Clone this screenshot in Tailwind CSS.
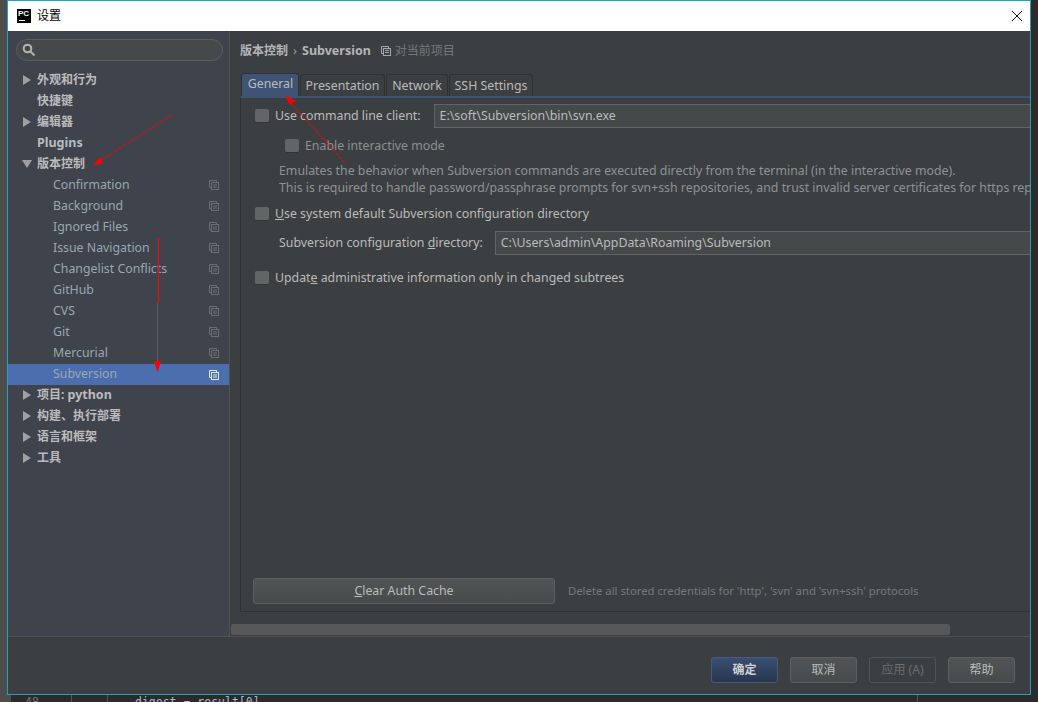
<!DOCTYPE html>
<html lang="zh-CN">
<head>
  <meta charset="UTF-8"/>
  <title>设置</title>
  <script src="https://cdn.jsdelivr.net/npm/@tailwindcss/browser@4"></script>
</head>
<body class="bg-[#2b2b2b] font-['Noto_Sans','Noto_Sans_CJK_SC',sans-serif] text-[12.33px] text-[#bbbbbb]">
<div class="relative w-[1038px] h-[702px] overflow-hidden flex">
  <!-- ide behind the dialog -->
  <div class="w-[7px] h-full bg-[#4d4d4d] shrink-0"></div>
  <div class="flex flex-col w-[1031px]">
    <!-- dialog -->
    <div class="w-[1024px] h-[695px] shrink-0 border border-[#1ba3c6] flex flex-col bg-[#3c3f41]">
      <div class="h-[30px] shrink-0 bg-white flex items-center text-black pl-[9px] pr-[7px]">
        <div class="w-[14px] h-[14px] bg-black relative shrink-0">
          <span class="absolute left-[1px] top-[0px] text-[8px] leading-[9px] font-bold text-white font-['Liberation_Sans']">PC</span>
          <span class="absolute left-[2px] bottom-[2px] w-[6px] h-px bg-white"></span>
        </div>
        <span class="ml-[6px] text-[12px]">设置</span>
        <svg class="ml-auto" width="12" height="12" viewBox="0 0 12 12"><path d="M1 1L11 11M11 1L1 11" stroke="#111" stroke-width="1" fill="none"/></svg>
      </div>

      <div class="flex-1 flex min-h-0">
        <!-- sidebar -->
        <div class="w-[221px] shrink-0 bg-[#3e434c] pt-[8px]">
          <div class="ml-[8px] mr-[6px] h-[22px] rounded-full border border-[#5a5d5f] bg-[#45494a] flex items-center pl-[5px]">
            <svg width="14" height="14" viewBox="0 0 14 14" fill="none" stroke="#b4b4b4" stroke-width="2"><circle cx="5.500" cy="5.500" r="3.800"/><path d="M8.500 8.500L12.500 12.500"/></svg>
          </div>
          <div class="mt-[8px] flex flex-col">
            <div class="h-[21px] flex items-center pl-[15px] font-bold text-[12px] gap-[6px]"><svg width="8" height="10" viewBox="0 0 8 10"><path d="M0 0L8 5L0 10Z" fill="#a0a0a0"/></svg><span>外观和行为</span></div>
            <div class="h-[21px] flex items-center pl-[29px] font-bold text-[12px]"><span>快捷键</span></div>
            <div class="h-[21px] flex items-center pl-[15px] font-bold text-[12px] gap-[6px]"><svg width="8" height="10" viewBox="0 0 8 10"><path d="M0 0L8 5L0 10Z" fill="#a0a0a0"/></svg><span>编辑器</span></div>
            <div class="h-[21px] flex items-center pl-[29px] font-bold text-[12.5px]"><span class="mt-[2px]">Plugins</span></div>
            <div class="h-[21px] flex items-center pl-[14px] font-bold text-[12px] gap-[5px]"><svg width="10" height="8" viewBox="0 0 10 8"><path d="M0 0L10 0L5 8Z" fill="#a0a0a0"/></svg><span>版本控制</span></div>

            <div class="h-[21px] flex items-center justify-between pl-[45px] pr-[10px] text-[#9aa7b0]"><span class="mt-[2px]">Confirmation</span><svg width="10" height="10" viewBox="0 0 10 10" fill="none" stroke="#6b6e70"><path d="M7.500 2V.5H.5V7.500H2"/><rect x="2.500" y="2.500" width="7" height="7"/><path d="M4 5H8M4 7H8"/></svg></div>
            <div class="h-[21px] flex items-center justify-between pl-[45px] pr-[10px] text-[#9aa7b0]"><span class="mt-[2px]">Background</span><svg width="10" height="10" viewBox="0 0 10 10" fill="none" stroke="#6b6e70"><path d="M7.500 2V.5H.5V7.500H2"/><rect x="2.500" y="2.500" width="7" height="7"/><path d="M4 5H8M4 7H8"/></svg></div>
            <div class="h-[21px] flex items-center justify-between pl-[45px] pr-[10px] text-[#9aa7b0]"><span class="mt-[2px]">Ignored Files</span><svg width="10" height="10" viewBox="0 0 10 10" fill="none" stroke="#6b6e70"><path d="M7.500 2V.5H.5V7.500H2"/><rect x="2.500" y="2.500" width="7" height="7"/><path d="M4 5H8M4 7H8"/></svg></div>
            <div class="h-[21px] flex items-center justify-between pl-[45px] pr-[10px] text-[#9aa7b0]"><span class="mt-[2px]">Issue Navigation</span><svg width="10" height="10" viewBox="0 0 10 10" fill="none" stroke="#6b6e70"><path d="M7.500 2V.5H.5V7.500H2"/><rect x="2.500" y="2.500" width="7" height="7"/><path d="M4 5H8M4 7H8"/></svg></div>
            <div class="h-[21px] flex items-center justify-between pl-[45px] pr-[10px] text-[#9aa7b0]"><span class="mt-[2px]">Changelist Conflicts</span><svg width="10" height="10" viewBox="0 0 10 10" fill="none" stroke="#6b6e70"><path d="M7.500 2V.5H.5V7.500H2"/><rect x="2.500" y="2.500" width="7" height="7"/><path d="M4 5H8M4 7H8"/></svg></div>
            <div class="h-[21px] flex items-center justify-between pl-[45px] pr-[10px] text-[#9aa7b0]"><span class="mt-[2px]">GitHub</span><svg width="10" height="10" viewBox="0 0 10 10" fill="none" stroke="#6b6e70"><path d="M7.500 2V.5H.5V7.500H2"/><rect x="2.500" y="2.500" width="7" height="7"/><path d="M4 5H8M4 7H8"/></svg></div>
            <div class="h-[21px] flex items-center justify-between pl-[45px] pr-[10px] text-[#9aa7b0]"><span class="mt-[2px]">CVS</span><svg width="10" height="10" viewBox="0 0 10 10" fill="none" stroke="#6b6e70"><path d="M7.500 2V.5H.5V7.500H2"/><rect x="2.500" y="2.500" width="7" height="7"/><path d="M4 5H8M4 7H8"/></svg></div>
            <div class="h-[21px] flex items-center justify-between pl-[45px] pr-[10px] text-[#9aa7b0]"><span class="mt-[2px]">Git</span><svg width="10" height="10" viewBox="0 0 10 10" fill="none" stroke="#6b6e70"><path d="M7.500 2V.5H.5V7.500H2"/><rect x="2.500" y="2.500" width="7" height="7"/><path d="M4 5H8M4 7H8"/></svg></div>
            <div class="h-[22px] pb-[1px] flex items-center justify-between pl-[45px] pr-[10px] text-[#9aa7b0]"><span class="mt-[2px]">Mercurial</span><svg width="10" height="10" viewBox="0 0 10 10" fill="none" stroke="#6b6e70"><path d="M7.500 2V.5H.5V7.500H2"/><rect x="2.500" y="2.500" width="7" height="7"/><path d="M4 5H8M4 7H8"/></svg></div>
            <div class="h-[21px] flex items-center justify-between pl-[45px] pr-[10px] text-[#9aa7b0] bg-[#4b6eaf]"><span>Subversion</span><svg width="10" height="10" viewBox="0 0 10 10" fill="none" stroke="#e6e6e6"><path d="M7.500 2V.5H.5V7.500H2"/><rect x="2.500" y="2.500" width="7" height="7"/><path d="M4 5H8M4 7H8"/></svg></div>

            <div class="h-[20px] flex items-center pl-[15px] font-bold text-[12px] gap-[6px]"><svg width="8" height="10" viewBox="0 0 8 10"><path d="M0 0L8 5L0 10Z" fill="#a0a0a0"/></svg><span>项目: <span class="text-[12.5px]">python</span></span></div>
            <div class="h-[21px] flex items-center pl-[15px] font-bold text-[12px] gap-[6px]"><svg width="8" height="10" viewBox="0 0 8 10"><path d="M0 0L8 5L0 10Z" fill="#a0a0a0"/></svg><span>构建、执行部署</span></div>
            <div class="h-[21px] flex items-center pl-[15px] font-bold text-[12px] gap-[6px]"><svg width="8" height="10" viewBox="0 0 8 10"><path d="M0 0L8 5L0 10Z" fill="#a0a0a0"/></svg><span>语言和框架</span></div>
            <div class="h-[21px] flex items-center pl-[15px] font-bold text-[12px] gap-[6px]"><svg width="8" height="10" viewBox="0 0 8 10"><path d="M0 0L8 5L0 10Z" fill="#a0a0a0"/></svg><span>工具</span></div>
          </div>
        </div>

        <!-- settings page -->
        <div class="flex-1 min-w-0 flex flex-col border-l border-[#4f5152] overflow-hidden">
          <div class="flex-1 min-h-0 pl-[10px] flex flex-col">
            <div class="h-[39px] flex items-center shrink-0 whitespace-nowrap">
              <span class="font-bold text-[12px] text-[#b5b5b5]">版本控制</span>
              <span class="ml-[5px] mr-[5px] text-[13px] text-[#999]">›</span>
              <span class="font-bold text-[12.5px] text-[#b5b5b5] mt-[2px]">Subversion</span>
              <svg class="ml-[10px]" width="10" height="10" viewBox="0 0 10 10" fill="none" stroke="#a8a8a8"><path d="M7.500 2V.5H.5V7.500H2"/><rect x="2.500" y="2.500" width="7" height="7"/><path d="M4 4.500H8M4 6.500H8"/></svg>
              <span class="ml-[4px] text-[12px] text-[#787878]">对当前项目</span>
            </div>
            <!-- tabs -->
            <div class="h-[23px] mt-[3px] ml-[1px] flex items-end shrink-0 whitespace-nowrap gap-[1px]">
              <div class="h-[23px] w-[58px] bg-[#3f5375] rounded-t-[3px] border border-b-0 border-[#2f3133] flex items-start justify-center pt-[1px] pl-[1px]">General</div>
              <div class="h-[22px] w-[85px] rounded-t-[3px] border border-b-0 border-[#2f3133] flex items-center justify-center pt-[2px]">Presentation</div>
              <div class="h-[22px] w-[62px] rounded-t-[3px] border border-b-0 border-[#2f3133] flex items-center justify-center pt-[2px]">Network</div>
              <div class="h-[22px] w-[84px] rounded-t-[3px] border border-b-0 border-[#2f3133] flex items-center justify-center pt-[2px]">SSH Settings</div>
            </div>
            <!-- panel -->
            <div class="w-[900px] h-[516px] shrink-0 border border-[#2f3133] border-t-[2px] border-t-[#3f5375] bg-[#3c3f41] relative whitespace-nowrap">
              <div class="pt-[6px] pl-[14px]">
                <div class="flex items-center h-[24px]">
                  <span class="w-[14px] h-[14px] rounded-[2px] bg-[#626566] border-b border-[#333] shrink-0"></span>
                  <span class="ml-[6px]">Use command line client:</span>
                  <div class="ml-[13px] h-[24px] w-[700px] shrink-0 border border-[#646464] bg-[#45494a] px-[5px] flex items-center">E:\soft\Subversion\bin\svn.exe</div>
                </div>
                <div class="flex items-center h-[24px] mt-[6px] ml-[30px] text-[#8d8f90]">
                  <span class="w-[14px] h-[14px] rounded-[2px] bg-[#626566] border-b border-[#333] shrink-0"></span>
                  <span class="ml-[6px]">Enable interactive mode</span>
                </div>
                <div class="ml-[24px] mt-[4px] text-[#8d9296] leading-[17px]">
                  <div>Emulates the behavior when Subversion commands are executed directly from the terminal (in the interactive mode).</div>
                  <div>This is required to handle password/passphrase prompts for svn+ssh repositories, and trust invalid server certificates for https repositories.</div>
                </div>
                <div class="flex items-center h-[24px] mt-[6px]">
                  <span class="w-[14px] h-[14px] rounded-[2px] bg-[#626566] border-b border-[#333] shrink-0"></span>
                  <span class="ml-[6px]"><u>U</u>se system default Subversion configuration directory</span>
                </div>
                <div class="flex items-center h-[24px] mt-[5px] ml-[24px]">
                  <span>Subversion configuration <u>d</u>irectory:</span>
                  <div class="ml-[12px] h-[24px] w-[700px] shrink-0 border border-[#646464] bg-[#45494a] px-[5px] flex items-center">C:\Users\admin\AppData\Roaming\Subversion</div>
                </div>
                <div class="flex items-center h-[24px] mt-[11px]">
                  <span class="w-[14px] h-[14px] rounded-[2px] bg-[#626566] border-b border-[#333] shrink-0"></span>
                  <span class="ml-[6px]">Updat<u>e</u> administrative information only in changed subtrees</span>
                </div>
              </div>
              <div class="absolute left-[12px] bottom-[7px] flex items-center">
                <div class="w-[302px] h-[26px] rounded-[3px] border border-[#5e6060] bg-linear-to-b from-[#505455] to-[#474b4c] flex items-center justify-center"><span><u>C</u>lear Auth Cache</span></div>
                <span class="ml-[13px] text-[11.3px] text-[#787878]">Delete all stored credentials for 'http', 'svn' and 'svn+ssh' protocols</span>
              </div>
            </div>
          </div>
          <!-- h scroll -->
          <div class="h-[24px] shrink-0 pt-[12px] pl-[1px]">
            <div class="w-[719px] h-[11px] rounded-[2px] bg-[#565859]"></div>
          </div>
        </div>
      </div>

      <!-- footer -->
      <div class="h-[58px] shrink-0 border-t border-[#4f5152] flex items-start justify-end pt-[20px] pr-[15px] gap-[12px]">
        <div class="w-[67px] h-[26px] rounded-[3px] border border-[#4a5a78] bg-linear-to-b from-[#3a4f71] to-[#263650] flex items-center justify-center text-[#d0d0d0] font-bold text-[12px]">确定</div>
        <div class="w-[67px] h-[26px] rounded-[3px] border border-[#5e6060] bg-linear-to-b from-[#505455] to-[#474b4c] flex items-center justify-center text-[12px]">取消</div>
        <div class="w-[67px] h-[26px] rounded-[3px] border border-[#515355] flex items-center justify-center text-[#6c6c6c] text-[12px]">应用 (A)</div>
        <div class="w-[67px] h-[26px] rounded-[3px] border border-[#5e6060] bg-linear-to-b from-[#505455] to-[#474b4c] flex items-center justify-center text-[12px]">帮助</div>
      </div>
    </div>
    <!-- editor peeking out below -->
    <div class="flex-1 flex font-['DejaVu_Sans_Mono'] text-[11.5px] text-[#a9b7c6] overflow-hidden">
      <span class="w-[4px] bg-[#4d4d4d]"></span>
      <span class="w-[61px] pl-[14px] text-[#777] border-r border-[#555] pt-[2px] leading-none">48</span>
      <span class="w-[36px] border-r border-[#555]"></span>
      <span class="pl-[27px] pt-[2px] leading-none whitespace-pre w-[810px] border-r border-[#555]">digest = result[0]</span>
    </div>
  </div>

  <!-- hand drawn red arrows on top of the screenshot -->
  <svg class="absolute left-0 top-0" width="1038" height="702" viewBox="0 0 1038 702" fill="none">
    <path d="M172 115L100 161" stroke="#ff0000" stroke-dasharray="4 1"/>
    <path d="M93 166L100 157L103 163Z" fill="#ff0000"/>
    <path d="M345 163L291 103" stroke="#ff0000" stroke-dasharray="4 1"/>
    <path d="M285 95L296 101L290 105Z" fill="#ff0000"/>
    <path d="M158.500 238V303" stroke="#e01010" stroke-width="1.500"/>
    <path d="M157.500 303V362" stroke="#5a5d60"/>
    <path d="M154 361H161L158 371H157Z" fill="#ff0000"/>
  </svg>
</div>
</body>
</html>
